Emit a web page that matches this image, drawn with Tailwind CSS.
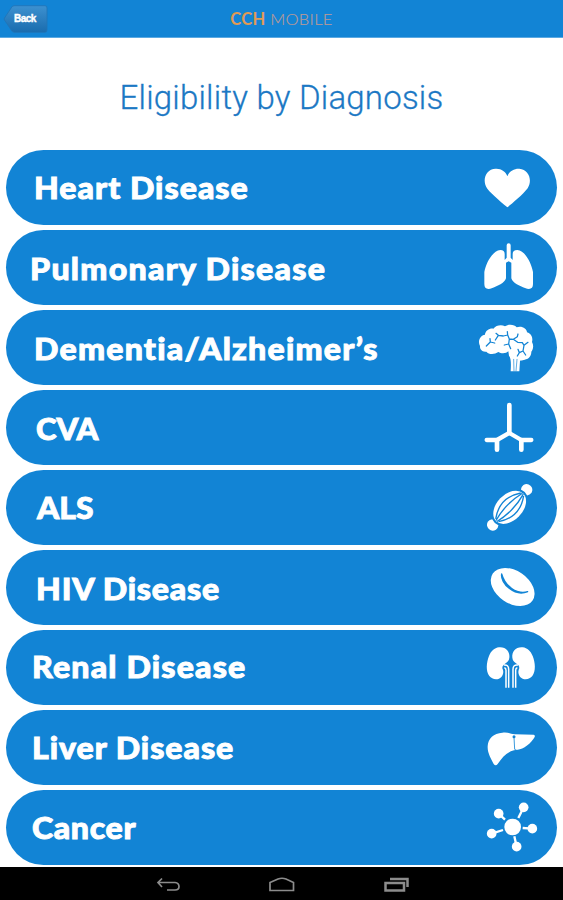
<!DOCTYPE html>
<html lang="en">
<head>
<meta charset="utf-8">
<title>CCH Mobile</title>
<script src="https://cdn.jsdelivr.net/npm/@tailwindcss/browser@4"></script>
</head>
<body class="w-[563px] h-[900px] overflow-hidden bg-white flex flex-col font-['Lato',sans-serif]">
<header class="h-[38px] shrink-0 bg-[#1284d5] border-b border-[#5ba9e2] grid grid-cols-[60px_1fr_60px] items-center">
  <button class="relative ml-[3px] w-[45px] h-[28px]">
    <svg class="block" width="45" height="28" viewBox="0 0 45 28"><defs><linearGradient id="b" x1="0" y1="0" x2="0" y2="1"><stop offset="0" stop-color="#3d91d0"/><stop offset="1" stop-color="#1a6cae"/></linearGradient></defs><path d="M11 .7H42Q44 .7 44 3V25Q44 27.300 42 27.300H11Q9 27.300 7.500 24L1.500 15Q.8 14 1.500 13L7.500 4Q9 .7 11 .7Z" fill="url(#b)" stroke="#2173b5" stroke-width=".8"/></svg>
    <span class="absolute left-[11px] top-[7px] text-[10px] leading-[14px] font-bold tracking-[-0.5px] text-white font-['Liberation_Sans',sans-serif] [-webkit-text-stroke:0.4px_white]">Back</span>
  </button>
  <div class="text-center text-[16.5px] leading-[20px] tracking-[0.3px] text-[#b99a98] whitespace-nowrap font-light [-webkit-text-stroke:0.2px_#b99a98]"><span class="font-bold text-[#e09a55] [-webkit-text-stroke:0]">CCH</span> MOBILE</div>
</header>
<h1 class="h-[112px] shrink-0 pt-[40px] text-center text-[33px] leading-[39px] tracking-[0.22px] font-light text-[#1b78c4] [-webkit-text-stroke:0.3px_#1b78c4] font-['Roboto',sans-serif] whitespace-nowrap">Eligibility by Diagnosis</h1>
<main class="h-[717px] shrink-0 px-[6px] flex flex-col gap-[5px] overflow-hidden text-white text-[30px] font-black leading-[75px] whitespace-nowrap">
  <div class="h-[75px] shrink-0 rounded-full bg-[#1284d5] flex justify-between pl-[28px]"><span class="origin-left scale-x-[1.07] tracking-[0.95px] [-webkit-text-stroke:0.9px_white]">Heart Disease</span>
    <svg width="97" height="75" viewBox="0 0 291 225" fill="#fff"><path d="M142 172C133 164 96 134 82 116C65 93 76 57 107 56C123 55 138 65 142 79C147 64 162 55 178 56C207 58 218 91 203 115C189 134 151 165 142 172Z"/></svg></div>
  <div class="h-[75px] shrink-0 rounded-full bg-[#1284d5] flex justify-between pl-[24px] leading-[76px]"><span class="origin-left scale-x-[1.07] tracking-[1.2px] [-webkit-text-stroke:0.9px_white]">Pulmonary Disease</span>
    <svg width="97" height="75" viewBox="0 0 291 225" fill="#fff"><path d="M140 46Q140 40 146 40T152 46V83L158 90V72Q158 60 172 60C193 61 213 95 219 126V162C219 176 210 180 195 174C180 168 158 160 154 145V98L146 94L138 98V145C134 160 112 168 97 174C82 180 73 176 73 162V126C79 95 99 62 121 60Q134 60 134 72V90L140 83Z"/></svg></div>
  <div class="h-[75px] shrink-0 rounded-full bg-[#1284d5] flex justify-between pl-[28px] leading-[77px]"><span class="origin-left scale-x-[1.07] tracking-[1.15px] [-webkit-text-stroke:0.9px_white]">Dementia/Alzheimer’s</span>
    <svg width="97" height="75" viewBox="0 0 291 225" fill="#fff"><path d="M60 108C52 92 61 76 75 74C76 62 89 54 100 56C108 46 124 43 135 49C148 40 165 45 170 52C184 46 201 55 201 67C216 72 219 86 216 96C223 108 218 119 214 125C214 137 207 146 198 148C188 153 181 151 180 153L178 184H152C153 165 154 145 147 137L145 124C139 131 124 132 115 126C104 134 86 134 79 125C66 127 59 117 60 108Z"/><g fill="none" stroke="#1284d5" stroke-width="3.800" stroke-linecap="round" stroke-linejoin="round"><path d="M79 108L91 96L104 99M91 96L90 86M106 90L115 76L130 78L143 75L142 65M115 76L108 70M143 75L148 87L160 88L172 80L174 72M160 88L173 97L187 98L192 106L204 97M192 106L189 123L178 128L172 138M189 123L197 135M178 128L174 118M148 87L146 102L133 105M146 102L152 116"/><path d="M161 148L162 183M171 148L168 183" stroke-width="2"/></g></svg></div>
  <div class="h-[75px] shrink-0 rounded-full bg-[#1284d5] flex justify-between pl-[30px] leading-[77px]"><span class="origin-left scale-x-[1.04] [-webkit-text-stroke:0.9px_white]">CVA</span>
    <svg width="97" height="75" viewBox="0 0 291 225" fill="none" stroke="#fff" stroke-width="14" stroke-linecap="round" stroke-linejoin="round"><path d="M148 45V129" /><path d="M148 129L111 150H80M148 129L184 150H214" stroke-width="13"/><path d="M111 150V179M184 150V179"/></svg></div>
  <div class="h-[75px] shrink-0 rounded-full bg-[#1284d5] flex justify-between pl-[31px] leading-[74px]"><span class="origin-left scale-x-[1.06] [-webkit-text-stroke:0.9px_white]">ALS</span>
    <svg width="97" height="75" viewBox="0 0 291 225" fill="#fff"><g transform="translate(149 112) rotate(-46)"><ellipse rx="58" ry="39"/><path id="e" d="M62-13Q67 0 62 13Q68 18 77 17Q90 13 90 0T77-17Q68-18 62-13Z"/><use href="#e" transform="scale(-1 1)"/><g fill="none" stroke="#1284d5" stroke-width="4"><path d="M-54-6Q0-44 54-6M-57-2Q0-17 57-2M-57 2Q0 17 57 2M-54 6Q0 44 54 6"/></g></g></svg></div>
  <div class="h-[75px] shrink-0 rounded-full bg-[#1284d5] flex justify-between pl-[30px] leading-[77px]"><span class="origin-left scale-x-[1.07] tracking-[0.75px] [-webkit-text-stroke:0.9px_white]">HIV Disease</span>
    <svg width="97" height="75" viewBox="0 0 291 225" fill="#fff"><ellipse cx="158" cy="111" rx="72" ry="49" transform="rotate(34 158 111)"/><path d="M125 72C120 99 164 142 203 125C169 134 135 108 125 72Z" stroke="#1284d5" stroke-width="4" fill="#1284d5" stroke-linejoin="round"/></svg></div>
  <div class="h-[75px] shrink-0 rounded-full bg-[#1284d5] flex justify-between pl-[26px] leading-[73px]"><span class="origin-left scale-x-[1.07] tracking-[1.1px] [-webkit-text-stroke:0.9px_white]">Renal Disease</span>
    <svg width="97" height="75" viewBox="0 0 291 225" fill="#fff"><g id="k"><path d="M117 52C137 50 150 64 148 83C147 93 141 97 134 102C127 107 125 113 129 120C132 130 127 142 117 146C106 150 94 146 88 138C77 124 79 97 87 78C93 63 103 54 117 52Z"/><path d="M131 105Q146 103 146 118V173M133 113Q138 114 138 121V173" fill="none" stroke="#fff" stroke-width="4.500"/></g><use href="#k" transform="translate(305 0) scale(-1 1)"/></svg></div>
  <div class="h-[75px] shrink-0 rounded-full bg-[#1284d5] flex justify-between pl-[26px]"><span class="origin-left scale-x-[1.07] tracking-[0.9px] [-webkit-text-stroke:0.9px_white]">Liver Disease</span>
    <svg width="97" height="75" viewBox="0 0 291 225" fill="#fff"><path d="M83 109C84 85 101 70 127 68C143 65 151 72 164 73L221 74Q226 75 224 81C214 99 190 119 173 119L162 121C139 127 127 142 113 162Q107 170 101 162C93 145 82 128 83 109Z"/><path d="M162 82L164 118L175 124" fill="none" stroke="#1284d5" stroke-width="2.500"/><circle cx="162" cy="80" r="4.500" fill="#1284d5"/></svg></div>
  <div class="h-[75px] shrink-0 rounded-full bg-[#1284d5] flex justify-between pl-[26px]"><span class="origin-left scale-x-[1.07] tracking-[0.6px] [-webkit-text-stroke:0.9px_white]">Cancer</span>
    <svg width="97" height="75" viewBox="0 0 291 225" fill="#fff"><g stroke="#fff" stroke-width="7"><path d="M116 71L135 89M191 52L175 84M95 131L129 120M217 116L188 114M170 170L163 139"/></g><circle cx="158" cy="111" r="25"/><circle cx="116" cy="71" r="14.500"/><circle cx="191" cy="52" r="14.500"/><circle cx="95" cy="131" r="14.500"/><circle cx="217" cy="116" r="14.500"/><circle cx="170" cy="170" r="14.500"/></svg></div>
</main>
<footer class="h-[33px] shrink-0 bg-black">
  <svg class="block" width="563" height="33" viewBox="0 0 563 33" fill="none" stroke="#8c8c8c" stroke-width="1.700"><path d="M162 11.500L158 15.500L162 20M158 15.500H175Q179 16 179 19.500T175 23H167"/><path d="M270 23.500V15.500L278 12Q282 10.500 286 12L293.500 15.500V23.500Z"/><path d="M385.500 16H404V23.500H385.500ZM390 12H407.500V20" stroke-width="2.500"/></svg>
</footer>
</body>
</html>
